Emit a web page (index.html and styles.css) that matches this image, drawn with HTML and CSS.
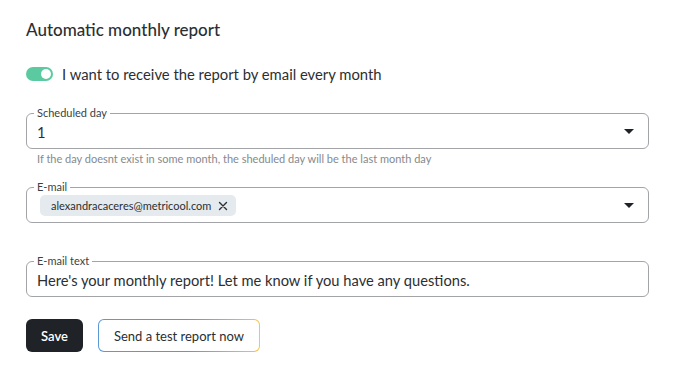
FILE: index.html
```html
<!DOCTYPE html>
<html lang="en">
<head>
  <meta charset="UTF-8" />
  <title>Automatic monthly report</title>
  <link rel="stylesheet" href="styles.css">
</head>
<body>
  <section class="report">
    <h2>Automatic monthly report</h2>

    <label class="switch-row">
      <span class="switch"><span class="knob"></span></span>
      I want to receive the report by email every month
    </label>

    <fieldset class="field field-day">
      <legend>Scheduled day</legend>
      <div class="field-body">
        <span class="value">1</span>
        <span class="caret"></span>
      </div>
    </fieldset>
    <p class="hint">If the day doesnt exist in some month, the sheduled day will be the last month day</p>

    <fieldset class="field field-mail">
      <legend>E-mail</legend>
      <div class="field-body">
        <span class="chip">alexandracaceres@metricool.com
          <svg width="10" height="10" viewBox="0 0 10 10"><path d="M1.5 1.5l7 7M8.5 1.5l-7 7" stroke="#2b2f33" stroke-width="1.4" stroke-linecap="round"/></svg>
        </span>
        <span class="caret"></span>
      </div>
    </fieldset>

    <fieldset class="field field-text">
      <legend>E-mail text</legend>
      <div class="field-body">
        <span class="value">Here's your monthly report! Let me know if you have any questions.</span>
      </div>
    </fieldset>

    <div class="actions">
      <button class="btn btn-dark">Save</button>
      <button class="btn btn-grad"><span>Send a test report now</span></button>
    </div>
  </section>
</body>
</html>
```

FILE: styles.css
```css
body {
  margin: 0;
  font-family: 'Lato', 'Noto Sans', sans-serif;
  color: #2b2f33;
  background: #ffffff;
}
.report {
  padding: 19px 28px 0 26px;
  display: flex;
  flex-direction: column;
}
h2 {
  margin: 0;
  font-size: 17px;
  font-weight: 500;
  line-height: 22px;
}
.switch-row {
  display: flex;
  align-items: center;
  gap: 9px;
  margin-top: 23px;
  font-size: 14.8px;
  line-height: 20px;
}
.switch {
  width: 27px;
  height: 14px;
  border-radius: 7px;
  background: #5ccaa0;
  position: relative;
}
.knob {
  position: absolute;
  right: 2px;
  top: 2px;
  width: 10px;
  height: 10px;
  border-radius: 50%;
  background: #ffffff;
}
.field {
  margin: 0;
  padding: 0 10px 0 10px;
  border: 1px solid #a2a4a7;
  border-radius: 6px;
  min-width: 0;
}
.field legend {
  font-size: 11px;
  line-height: 12px;
  padding: 0 3px;
  margin-left: -3px;
  color: #3b3f44;
}
.field-body {
  height: 33px;
  display: flex;
  align-items: center;
  justify-content: space-between;
  margin-top: -4px;
}
.field-day {
  margin-top: 23px;
}
.value {
  font-size: 14.7px;
}
.caret {
  width: 0;
  height: 0;
  border-left: 5px solid transparent;
  border-right: 5px solid transparent;
  border-top: 5px solid #1f2328;
  margin-right: 4px;
}
.hint {
  margin: 3px 0 0 11px;
  font-size: 11px;
  line-height: 13px;
  color: #86898d;
}
.field-mail {
  margin-top: 16px;
}
.chip {
  display: inline-flex;
  align-items: center;
  gap: 7px;
  margin-left: 3px;
  background: #e5eaef;
  border-radius: 5px;
  padding: 3px 8px 3px 11px;
  font-size: 11px;
  line-height: 15px;
}
.field-text {
  margin-top: 32px;
}
.actions {
  display: flex;
  gap: 15px;
  margin-top: 22px;
}
.btn {
  font-family: inherit;
  font-size: 13px;
  height: 33px;
  border-radius: 6px;
  cursor: pointer;
}
.btn-dark {
  background: #1f2328;
  color: #ffffff;
  border: none;
  padding: 0 15px;
  font-weight: 600;
}
.btn-grad {
  border: 1px solid transparent;
  background: linear-gradient(#fff, #fff) padding-box,
    linear-gradient(90deg, #5b9ad6, #e0609a 55%, #f3c74a) border-box;
  color: #2b2f33;
  padding: 0 15px;
}
```
